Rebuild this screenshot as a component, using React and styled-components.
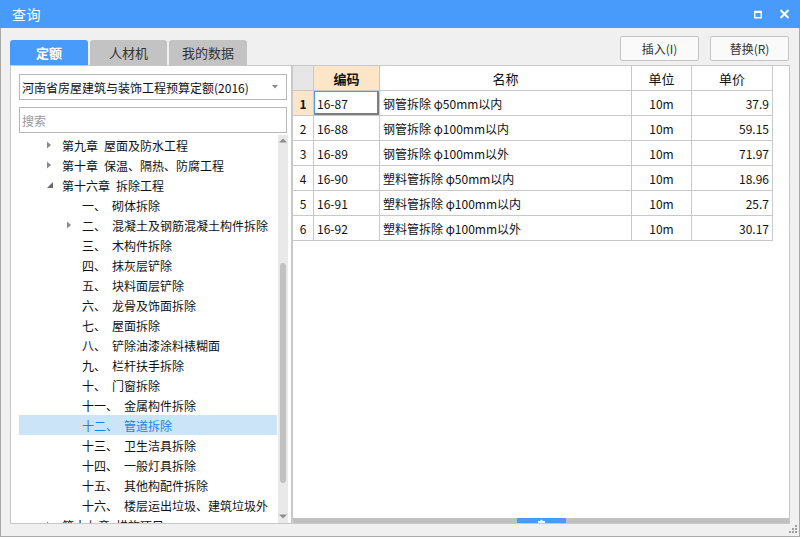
import React from "react";
import styled, { createGlobalStyle } from "styled-components";

const Global = createGlobalStyle`
  html, body { margin: 0; padding: 0; background: #f0f0f0; }
  body { font-family: "Noto Sans CJK SC", "Noto Sans", sans-serif; font-size: 12px; color: #111; }
  * { box-sizing: border-box; }
`;

const BLUE = "#489bfa";
const LINE = "#c8c8c8";

const Window = styled.div`
  width: 800px;
  height: 537px;
  display: flex;
  flex-direction: column;
  background: #f0f0f0;
  overflow: hidden;
`;

const TitleBar = styled.div`
  height: 28px;
  flex: none;
  background: ${BLUE};
  display: flex;
  align-items: center;
  padding-left: 12px;
  padding-right: 10px;
  color: #fff;
  font-size: 14px;
`;

const Title = styled.div`
  flex: 1;
  letter-spacing: 0.5px;
`;

const TitleIcons = styled.div`
  display: flex;
  align-items: center;
  gap: 16px;
`;

const Body = styled.div`
  flex: 1;
  display: flex;
  flex-direction: column;
  border: 1px solid #a9a9a9;
  border-top: none;
`;

const Toolbar = styled.div`
  height: 37px;
  flex: none;
  display: flex;
  justify-content: space-between;
  padding: 0 10px 0 9px;
`;

const Tabs = styled.div`
  display: flex;
  align-self: flex-end;
  gap: 2px;
`;

const Tab = styled.div`
  width: ${(p) => p.$w}px;
  height: 25px;
  display: flex;
  align-items: center;
  justify-content: center;
  border-radius: 3px 3px 0 0;
  font-size: 13px;
  background: ${(p) => (p.$active ? BLUE : "#c3c3c3")};
  color: ${(p) => (p.$active ? "#fff" : "#333")};
  font-weight: ${(p) => (p.$active ? 700 : 400)};
`;

const Buttons = styled.div`
  display: flex;
  gap: 11px;
  margin-top: 8px;
  align-self: flex-start;
`;

const Button = styled.div`
  width: 79px;
  height: 25px;
  display: flex;
  align-items: center;
  justify-content: center;
  background: #fafafa;
  border: 1px solid #c4c4c4;
  border-radius: 2px;
  color: #333;
  font-size: 12px;
`;

const Main = styled.div`
  height: 459px;
  flex: none;
  display: flex;
  padding: 0 9px 0 9px;
`;

const LeftPanel = styled.div`
  width: 282px;
  flex: none;
  background: #fff;
  border: 1px solid ${LINE};
  display: flex;
  flex-direction: column;
  padding: 8px 4px 0 8px;
`;

const Field = styled.div`
  height: 26px;
  flex: none;
  border: 1px solid #b8b8b8;
  display: flex;
  align-items: center;
  padding: 0 8px 0 2px;
  color: ${(p) => (p.$placeholder ? "#9a9a9a" : "#111")};
  font-size: 12px;
  margin-bottom: ${(p) => p.$mb || 0}px;
`;

const FieldText = styled.span`
  flex: 1;
  white-space: nowrap;
`;

const Tree = styled.div`
  flex: 1;
  display: flex;
  min-height: 0;
`;

const TreeList = styled.div`
  width: 258px;
  flex: none;
  overflow: hidden;
`;

const TreeRow = styled.div`
  height: 20px;
  display: flex;
  align-items: center;
  padding-left: ${(p) => 25 + p.$level * 20}px;
  background: ${(p) => (p.$selected ? "#cce4f8" : "transparent")};
  color: ${(p) => (p.$selected ? "#1f7fe0" : "#111")};
  white-space: nowrap;
  font-size: 12px;
`;

const Arrow = styled.span`
  width: 18px;
  flex: none;
  display: flex;
  align-items: center;
`;

const NodeName = styled.span`
  margin-left: 6px;
`;

const VScroll = styled.div`
  width: 10px;
  flex: none;
  margin-left: 1px;
  background: #e9e9e9;
  display: flex;
  flex-direction: column;
  align-items: center;
`;

const ScrollArrow = styled.div`
  height: 10px;
  flex: none;
  display: flex;
  align-items: center;
  justify-content: center;
`;

const VThumbSpace = styled.div`
  height: ${(p) => p.$h}px;
  flex: none;
`;

const VThumb = styled.div`
  width: 6px;
  height: ${(p) => p.$h}px;
  border-radius: 3px;
  background: #c1c1c1;
  flex: none;
`;

const RightPanel = styled.div`
  flex: 1;
  background: #fff;
  border: 1px solid ${LINE};
  display: flex;
  flex-direction: column;
`;

const GridArea = styled.div`
  flex: 1;
`;

const Grid = styled.div`
  display: grid;
  grid-template-columns: 21px 66px 252px 60px 81px;
  grid-auto-rows: 25px;
  width: 480px;
`;

const Cell = styled.div`
  border-right: 1px solid ${LINE};
  border-bottom: 1px solid ${LINE};
  display: flex;
  align-items: center;
  justify-content: ${(p) => p.$align || "flex-start"};
  padding: ${(p) => (p.$align === "flex-end" ? "0 3px 0 0" : p.$align === "center" ? "0" : "0 0 0 3px")};
  background: ${(p) => p.$bg || "#fff"};
  font-weight: ${(p) => (p.$bold ? 700 : 400)};
  font-size: ${(p) => (p.$size ? p.$size : 12)}px;
  white-space: nowrap;
  box-shadow: ${(p) => (p.$focus ? `inset 1px 1px 0 ${BLUE}, inset -2px -2px 0 #7d7d7d` : "none")};
`;

const HScroll = styled.div`
  height: 5px;
  flex: none;
  background: #c0c0c0;
  display: flex;
  justify-content: center;
`;

const HThumb = styled.div`
  width: 49px;
  height: 5px;
  background: ${BLUE};
  display: flex;
  align-items: center;
  justify-content: center;
`;

const Footer = styled.div`
  flex: 1;
  display: flex;
  justify-content: flex-end;
  align-items: flex-start;
  padding: 1px 1px 0 0;
`;

const treeRows = [
  { level: 0, arrow: "closed", prefix: "第九章", name: "屋面及防水工程" },
  { level: 0, arrow: "closed", prefix: "第十章", name: "保温、隔热、防腐工程" },
  { level: 0, arrow: "open", prefix: "第十六章", name: "拆除工程" },
  { level: 1, prefix: "一、", name: "砌体拆除" },
  { level: 1, arrow: "closed", prefix: "二、", name: "混凝土及钢筋混凝土构件拆除" },
  { level: 1, prefix: "三、", name: "木构件拆除" },
  { level: 1, prefix: "四、", name: "抹灰层铲除" },
  { level: 1, prefix: "五、", name: "块料面层铲除" },
  { level: 1, prefix: "六、", name: "龙骨及饰面拆除" },
  { level: 1, prefix: "七、", name: "屋面拆除" },
  { level: 1, prefix: "八、", name: "铲除油漆涂料裱糊面" },
  { level: 1, prefix: "九、", name: "栏杆扶手拆除" },
  { level: 1, prefix: "十、", name: "门窗拆除" },
  { level: 1, prefix: "十一、", name: "金属构件拆除" },
  { level: 1, prefix: "十二、", name: "管道拆除", selected: true },
  { level: 1, prefix: "十三、", name: "卫生洁具拆除" },
  { level: 1, prefix: "十四、", name: "一般灯具拆除" },
  { level: 1, prefix: "十五、", name: "其他构配件拆除" },
  { level: 1, prefix: "十六、", name: "楼层运出垃圾、建筑垃圾外" },
  { level: 0, arrow: "closed", prefix: "第十七章", name: "措施项目" },
];

const gridRows = [
  ["16-87", "钢管拆除 φ50mm以内", "10m", "37.9"],
  ["16-88", "钢管拆除 φ100mm以内", "10m", "59.15"],
  ["16-89", "钢管拆除 φ100mm以外", "10m", "71.97"],
  ["16-90", "塑料管拆除 φ50mm以内", "10m", "18.96"],
  ["16-91", "塑料管拆除 φ100mm以内", "10m", "25.7"],
  ["16-92", "塑料管拆除 φ100mm以外", "10m", "30.17"],
];

const ORANGE = "#fde6c8";

function TreeArrow({ type }) {
  if (type === "closed")
    return (
      <svg width="8" height="8" viewBox="0 0 8 8" style={{ marginLeft: 2 }}>
        <path d="M1 0.5 L5 4 L1 7.5 Z" fill="#8a8a8a" />
      </svg>
    );
  if (type === "open")
    return (
      <svg width="8" height="8" viewBox="0 0 8 8" style={{ marginLeft: 3 }}>
        <path d="M6 1 L6 7 L0 7 Z" fill="#6a6a6a" />
      </svg>
    );
  return null;
}

export default function App() {
  return (
    <>
      <Global />
      <Window>
        <TitleBar>
          <Title>查询</Title>
          <TitleIcons>
            <svg width="10" height="9" viewBox="0 0 10 9">
              <path d="M1 1.5 H9 M1.75 1 V8.5 M8.25 1 V8.5 M1 7.75 H9" stroke="#fff" strokeWidth="1.5" fill="none" />
              <path d="M1 1 H9 V3 H1 Z" fill="#fff" />
            </svg>
            <svg width="11" height="10" viewBox="0 0 11 10">
              <path d="M1.5 1 L9.5 9 M9.5 1 L1.5 9" stroke="#fff" strokeWidth="2" />
            </svg>
          </TitleIcons>
        </TitleBar>
        <Body>
          <Toolbar>
            <Tabs>
              <Tab $active $w={78}>定额</Tab>
              <Tab $w={77}>人材机</Tab>
              <Tab $w={78}>我的数据</Tab>
            </Tabs>
            <Buttons>
              <Button>插入(I)</Button>
              <Button>替换(R)</Button>
            </Buttons>
          </Toolbar>
          <Main>
            <LeftPanel>
              <Field $mb={7}>
                <FieldText>河南省房屋建筑与装饰工程预算定额(2016)</FieldText>
                <svg width="6" height="4" viewBox="0 0 6 4">
                  <path d="M0 0 H6 L3 3.5 Z" fill="#8a8a8a" />
                </svg>
              </Field>
              <Field $placeholder $mb={2}>
                <FieldText>搜索</FieldText>
              </Field>
              <Tree>
                <TreeList>
                  {treeRows.map((r, i) => (
                    <TreeRow key={i} $level={r.level} $selected={r.selected}>
                      <Arrow>
                        <TreeArrow type={r.arrow} />
                      </Arrow>
                      <span>{r.prefix}</span>
                      <NodeName>{r.name}</NodeName>
                    </TreeRow>
                  ))}
                </TreeList>
                <VScroll>
                  <ScrollArrow>
                    <svg width="8" height="5" viewBox="0 0 8 5">
                      <path d="M0 4.5 L4 0.5 L8 4.5 Z" fill="#8c8c8c" />
                    </svg>
                  </ScrollArrow>
                  <VThumbSpace $h={118} />
                  <VThumb $h={220} />
                  <VThumbSpace $h={28} />
                  <ScrollArrow>
                    <svg width="8" height="5" viewBox="0 0 8 5">
                      <path d="M0 0.5 L8 0.5 L4 4.5 Z" fill="#8c8c8c" />
                    </svg>
                  </ScrollArrow>
                </VScroll>
              </Tree>
            </LeftPanel>
            <RightPanel>
              <GridArea>
                <Grid>
                  <Cell $bg="#e6e6e6" />
                  <Cell $bg={ORANGE} $bold $align="center" $size={13}>编码</Cell>
                  <Cell $align="center" $size={13}>名称</Cell>
                  <Cell $align="center" $size={13}>单位</Cell>
                  <Cell $align="center" $size={13}>单价</Cell>
                  {gridRows.map((r, i) => (
                    <React.Fragment key={i}>
                      <Cell $align="center" $bg={i === 0 ? ORANGE : "#fff"} $bold={i === 0}>
                        {i + 1}
                      </Cell>
                      <Cell $focus={i === 0}>{r[0]}</Cell>
                      <Cell>{r[1]}</Cell>
                      <Cell $align="center">{r[2]}</Cell>
                      <Cell $align="flex-end">{r[3]}</Cell>
                    </React.Fragment>
                  ))}
                </Grid>
              </GridArea>
              <HScroll>
                <HThumb>
                  <svg width="9" height="4" viewBox="0 0 9 4">
                    <path d="M3 2 L4.5 0.5 L6 2 H8 V4 H1 V2 Z" fill="#fff" />
                  </svg>
                </HThumb>
              </HScroll>
            </RightPanel>
          </Main>
          <Footer>
            <svg width="10" height="9" viewBox="0 0 10 9">
              <rect x="7" y="0" width="2" height="2" fill="#a0a0a0" />
              <rect x="4" y="3" width="2" height="2" fill="#a0a0a0" />
              <rect x="7" y="3" width="2" height="2" fill="#a0a0a0" />
              <rect x="1" y="6" width="2" height="2" fill="#a0a0a0" />
              <rect x="4" y="6" width="2" height="2" fill="#a0a0a0" />
              <rect x="7" y="6" width="2" height="2" fill="#a0a0a0" />
            </svg>
          </Footer>
        </Body>
      </Window>
    </>
  );
}
